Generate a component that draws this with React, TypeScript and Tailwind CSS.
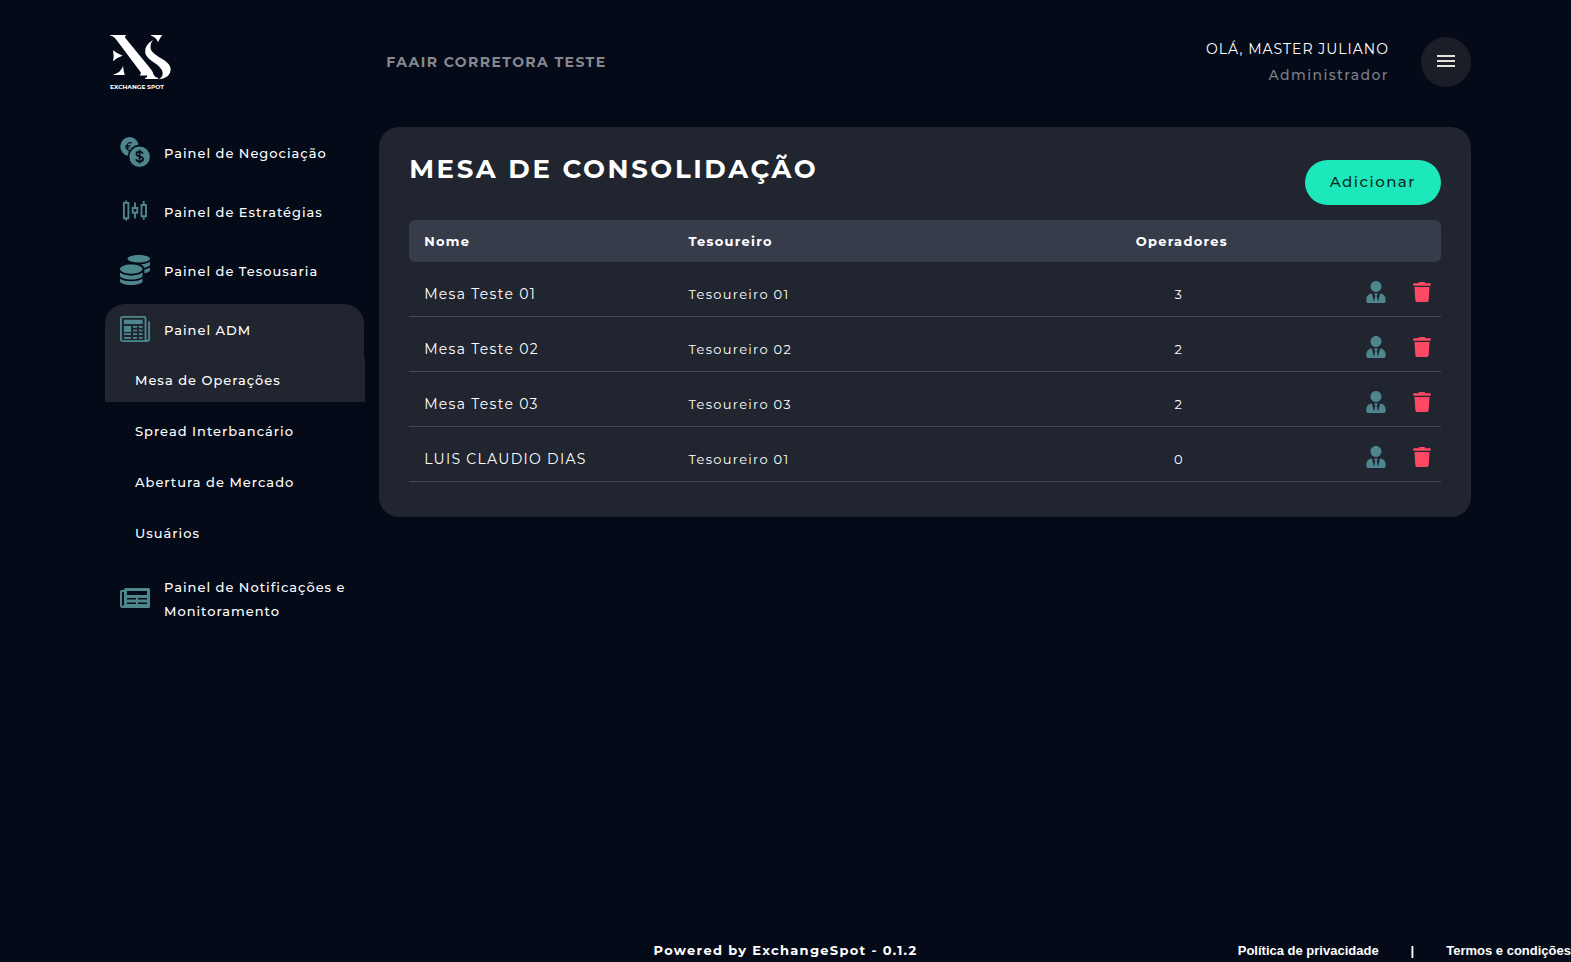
import type { ReactNode } from "react";
import { FaCoins, FaTrash, FaUserTie } from "react-icons/fa";
import { MdMenu } from "react-icons/md";

function Logo() {
  return (
    <a href="#" aria-label="Exchange Spot" className="flex flex-col items-start gap-1 text-white">
      <svg viewBox="60 43 182 136" className="h-[46px] w-[61px]" fill="currentColor" aria-hidden="true">
        <path d="M60 45H108V47Q102 49 107 56L181 146Q188 155 190 163Q193 171 204 174V177H165V174Q172 172 171 166H149V164Q155 161 150 154L80 61Q72 49 60 47Z" />
        <path d="M182 45H216Q209 54 203 67Q199 53 182 47Z" />
        <path d="M188 60Q161 77 165 99Q168 112 190 127Q215 143 217 157Q218 170 206 178Q240 174 241 149Q241 131 216 117Q190 103 183 91Q177 76 188 60Z" />
        <path d="M69 91Q82 102 98 107Q82 111 69 124Q73 107 69 91Z" />
        <path d="M71 163Q91 159 99 138Q100 153 104 165H71Z" />
      </svg>
      <span className="text-[6px] leading-[6px] font-bold whitespace-nowrap">EXCHANGE SPOT</span>
    </a>
  );
}

function CurrencyIcon() {
  return (
    <svg viewBox="0 0 30 30" className="size-[30px]" fill="none" aria-hidden="true">
      <path fill="currentColor" d="M9.5 0a9.5 9.5 0 0 1 9.1 7.6A12 12 0 0 0 7.900 18.800 9.5 9.5 0 0 1 9.5 0Z" />
      <path stroke="#040a18" strokeWidth="1.200" d="M12 6C9 4.600 7 6.600 7 9.600s1.300 4.200 2.800 3.900M5.200 8.800h5.400M5.200 10.800h4.200" />
      <circle cx="19.600" cy="19.700" r="10.300" fill="currentColor" />
      <path stroke="#040a18" strokeWidth="1.700" d="M22.900 16.600c-.5-1.400-1.700-2-3.300-2-1.900 0-3.200.9-3.200 2.400 0 3.300 6.700 1.600 6.700 5 0 1.600-1.400 2.600-3.400 2.600-1.900 0-3.200-.8-3.700-2.400M19.600 12.800v13.600" />
    </svg>
  );
}

function CandlesIcon() {
  return (
    <svg viewBox="0 0 30 30" className="size-[30px]" fill="none" stroke="currentColor" strokeWidth="1.900" aria-hidden="true">
      <path d="M3.900 6.900h4.500v15.300H3.900zM6.100 4.500v2.300M6.100 22.200v2.300" />
      <path d="M12.700 12h4.600v4.800h-4.600zM15 6.500V12M15 17v5.500" />
      <path d="M21.500 9h4.500v11.200h-4.500zM23.700 5v4M23.700 20.200v3.600" />
    </svg>
  );
}

function GazetteIcon() {
  return (
    <svg viewBox="0 0 30 30" className="size-[30px]" fill="none" stroke="currentColor" aria-hidden="true">
      <path strokeWidth="1.800" d="M25.500 25V4.400Q25.500 2.900 24 2.900H2.400Q.9 2.900.9 4.400v21.200q0 1.500 1.500 1.500h24.700q2-.2 2-2V7.600M25.500 25q0 2 1.800 2" />
      <path fill="currentColor" stroke="none" d="M4 5.800h18.500v4.200H4zM4 12h7v6H4z" />
      <path strokeWidth="1.700" d="M13 12.800h4M18.800 12.800h3.700M13 16.500h4M18.800 16.500h3.700M4 20.200h7M13 20.200h4M18.800 20.200h3.700M4 23.900h7M13 23.900h4M18.800 23.900h3.700" />
    </svg>
  );
}

function NewsIcon() {
  return (
    <svg viewBox="0 0 30 30" className="size-[30px]" aria-hidden="true">
      <path
        fill="currentColor"
        fillRule="evenodd"
        d="M5.500 5H28.500Q30 5 30 6.500V23.500Q30 25 28.500 25H2.500Q0 25 0 22.500V8.500Q0 7 1.500 7H4V6.500Q4 5 5.500 5ZM2 9V22.500Q3.800 23 4 21.500V9ZM7 8V12H27V8ZM7 15V16.500H16V15ZM18 15V16.500H27V15ZM7 19.500V21H16V19.500ZM18 19.500V21H27V19.500Z"
      />
    </svg>
  );
}

function NavItem({ icon, label, active = false }: { icon: ReactNode; label: string; active?: boolean }) {
  return (
    <a
      href="#"
      className={`flex min-h-[53px] items-center gap-[14px] px-[15px] pt-3 pb-[14px] leading-6 ${
        active ? "mr-px rounded-t-[20px] bg-[#21252f]" : ""
      }`}
    >
      <span className="-mt-2 -mb-1.5 shrink-0 text-[#4e868e]">{icon}</span>
      <span>{label}</span>
    </a>
  );
}

const subItems = ["Mesa de Operações", "Spread Interbancário", "Abertura de Mercado", "Usuários"];

const rows = [
  { name: "Mesa Teste 01", treasurer: "Tesoureiro 01", operators: 3 },
  { name: "Mesa Teste 02", treasurer: "Tesoureiro 02", operators: 2 },
  { name: "Mesa Teste 03", treasurer: "Tesoureiro 03", operators: 2 },
  { name: "LUIS CLAUDIO DIAS", treasurer: "Tesoureiro 01", operators: 0 },
];

export default function App() {
  return (
    <div className="flex min-h-screen flex-col overflow-x-hidden bg-[#040a18] font-[Montserrat,Inter,sans-serif] text-[13px] text-white">
      <header className="flex h-[127px] items-center px-[100px] pb-[3px]">
        <div className="w-1/5 shrink-0 pl-[10px]">
          <Logo />
        </div>
        <p className="flex-1 pl-3 text-sm font-bold tracking-widest text-[#85888f]">FAAIR CORRETORA TESTE</p>
        <div className="mr-8 text-right text-sm leading-[26px]">
          <p className="tracking-[1px]">OLÁ, MASTER JULIANO</p>
          <p className="font-medium tracking-widest text-[#7d8087]">Administrador</p>
        </div>
        <button type="button" aria-label="Menu" className="flex size-[50px] items-center justify-center rounded-full bg-[#1b1d27] pb-0.5 text-[#e4e3de]">
          <MdMenu className="size-6" />
        </button>
      </header>

      <div className="flex flex-1 items-start px-[100px] tracking-widest">
        <nav className="flex w-1/5 shrink-0 flex-col gap-[6px] pr-[9px] pl-[5px] font-medium tracking-[1px]">
          <NavItem icon={<CurrencyIcon />} label="Painel de Negociação" />
          <NavItem icon={<CandlesIcon />} label="Painel de Estratégias" />
          <NavItem icon={<FaCoins className="size-[30px]" />} label="Painel de Tesousaria" />
          <div>
            <NavItem icon={<GazetteIcon />} label="Painel ADM" active />
            <ul className="flex flex-col gap-[6px]">
              {subItems.map((item, i) => (
                <li key={item}>
                  <a href="#" className={`flex h-[45px] items-center pt-0.5 pl-[30px] ${i === 0 ? "bg-[#21252f]" : ""}`}>
                    {item}
                  </a>
                </li>
              ))}
            </ul>
          </div>
          <div className="pt-0.5">
            <NavItem icon={<NewsIcon />} label="Painel de Notificações e Monitoramento" />
          </div>
        </nav>

        <main className="ml-[5px] flex-1 rounded-[20px] bg-[#21252f] px-[30px] pb-[35px]">
          <div className="flex items-start justify-between pb-[15px]">
            <h1 className="pt-6 text-[26px] leading-9 font-bold tracking-widest">MESA DE CONSOLIDAÇÃO</h1>
            <button type="button" className="mt-[33px] h-[45px] rounded-full bg-[#1ce8bb] px-[25px] text-[15px] font-medium tracking-widest text-[#062925]">
              Adicionar
            </button>
          </div>
          <table className="w-full table-fixed border-separate border-spacing-0 text-left">
            <colgroup>
              <col className="w-[26%]" />
              <col className="w-[38%]" />
              <col className="w-[21%]" />
              <col className="w-[15%]" />
            </colgroup>
            <thead>
              <tr className="h-[42px] font-bold">
                <th className="rounded-l-md bg-[#373c4b] pt-0.5 pl-[15px]">Nome</th>
                <th className="bg-[#373c4b] pt-0.5 pl-[11px]">Tesoureiro</th>
                <th className="bg-[#373c4b] pt-0.5 pl-2 text-center">Operadores</th>
                <th className="rounded-r-md bg-[#373c4b]" aria-label="Ações" />
              </tr>
            </thead>
            <tbody>
              {rows.map((row) => (
                <tr key={row.name} className="h-[55px]">
                  <td className="border-b border-[#45484f] pt-[10px] pl-[15px] text-sm">{row.name}</td>
                  <td className="border-b border-[#45484f] pt-3 pl-[11px]">{row.treasurer}</td>
                  <td className="border-b border-[#45484f] pt-3 pl-0.5 text-center">{row.operators}</td>
                  <td className="border-b border-[#45484f] pt-[6px] pr-[9px]">
                    <div className="flex items-center justify-end gap-[25px]">
                      <button type="button" aria-label={`Operadores de ${row.name}`} className="text-[#4e868e]">
                        <FaUserTie className="size-[22px]" />
                      </button>
                      <button type="button" aria-label={`Excluir ${row.name}`} className="text-[#ff4863]">
                        <FaTrash className="size-5" />
                      </button>
                    </div>
                  </td>
                </tr>
              ))}
            </tbody>
          </table>
        </main>
      </div>

      <footer className="grid h-[22px] grid-cols-3 items-center font-bold whitespace-nowrap">
        <p className="col-start-2 text-center tracking-widest">Powered by ExchangeSpot - 0.1.2</p>
        <div className="flex justify-end gap-8 font-[Liberation_Sans,Arial,sans-serif]">
          <a href="#">Política de privacidade</a>
          <span>|</span>
          <a href="#">Termos e condições</a>
        </div>
      </footer>
    </div>
  );
}
